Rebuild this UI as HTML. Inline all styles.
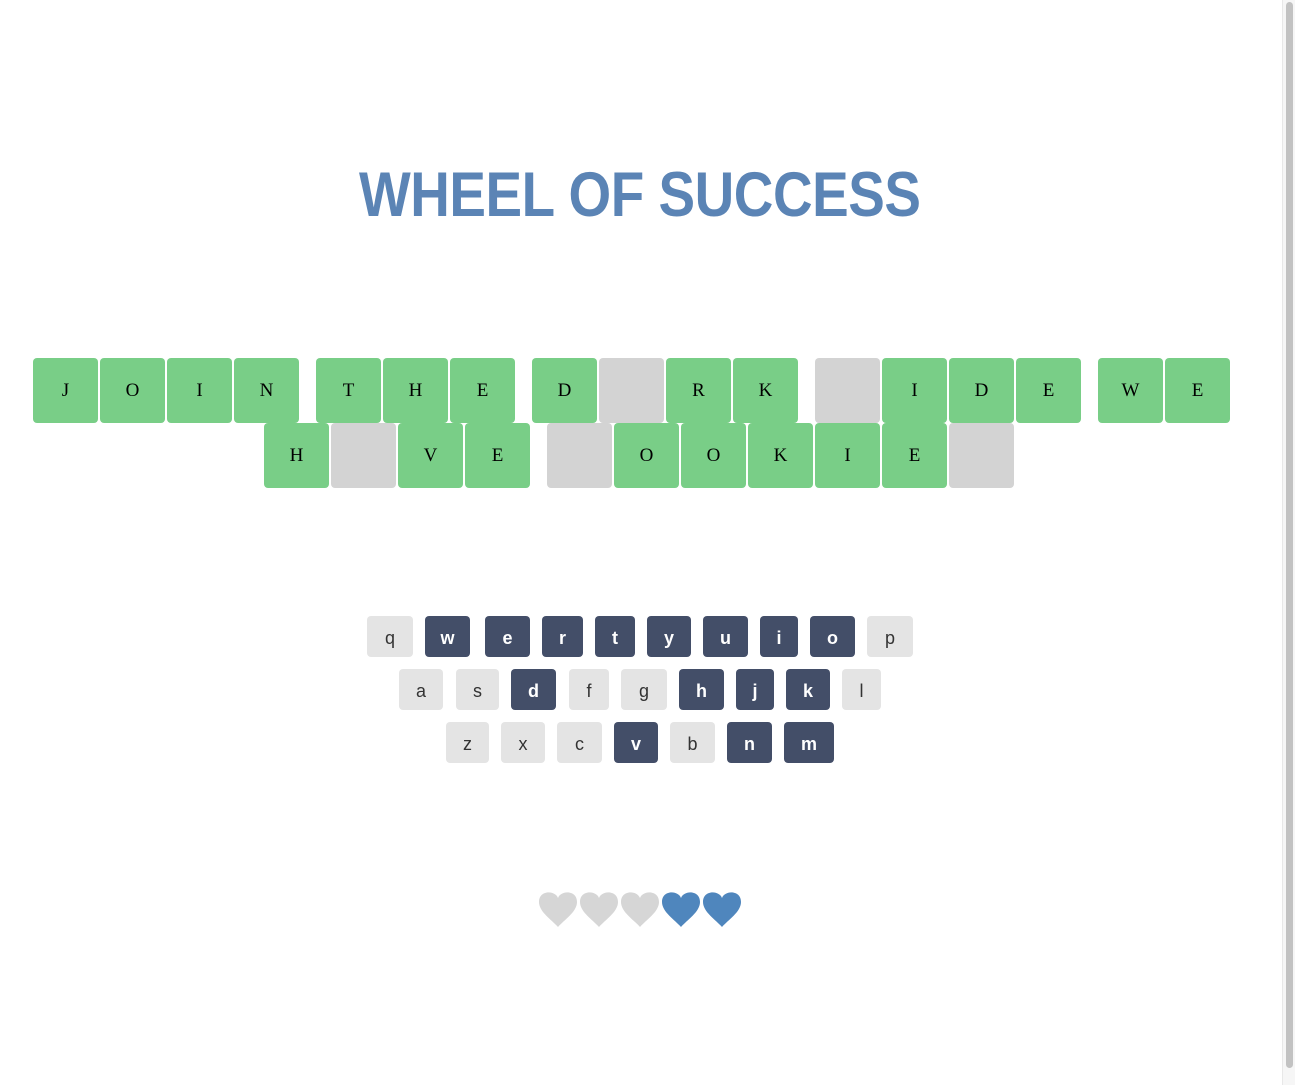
<!DOCTYPE html>
<html><head><meta charset="utf-8"><style>
body{margin:0;width:1295px;height:1085px;background:#fff;position:relative;overflow:hidden;font-family:"Liberation Sans",sans-serif}
h1{position:absolute;left:0;width:1280px;top:155px;margin:0;text-align:center;font-size:63px;line-height:80px;font-weight:bold;color:#5b84b5}
h1 span{display:inline-block;transform:scaleX(0.87);letter-spacing:-0.5px}
.t{position:absolute;width:65px;height:65px;border-radius:4px;background:#79ce87;font-family:"Liberation Serif",serif;font-size:19px;line-height:65px;text-align:center;color:#000}
.t.b{background:#d3d3d3}
.k{position:absolute;height:41px;border-radius:4px;background:#e4e4e4;color:#333;font-size:18px;line-height:44px;text-align:center}
.k.d{background:#434e68;color:#fff;font-weight:bold}
.sb{position:absolute;right:0;top:0;width:12px;height:1085px;background:#f6f6f6;border-left:1px solid #e8e8e8}
.sb div{position:absolute;left:3px;top:2px;width:7px;height:1066px;background:#c2c2c2;border-radius:4px}
svg{position:absolute}
</style></head><body>
<h1><span>WHEEL OF SUCCESS</span></h1>
<div class="t" style="left:33px;top:358px">J</div>
<div class="t" style="left:100px;top:358px">O</div>
<div class="t" style="left:167px;top:358px">I</div>
<div class="t" style="left:234px;top:358px">N</div>
<div class="t" style="left:316px;top:358px">T</div>
<div class="t" style="left:383px;top:358px">H</div>
<div class="t" style="left:450px;top:358px">E</div>
<div class="t" style="left:532px;top:358px">D</div>
<div class="t b" style="left:599px;top:358px"></div>
<div class="t" style="left:666px;top:358px">R</div>
<div class="t" style="left:733px;top:358px">K</div>
<div class="t b" style="left:815px;top:358px"></div>
<div class="t" style="left:882px;top:358px">I</div>
<div class="t" style="left:949px;top:358px">D</div>
<div class="t" style="left:1016px;top:358px">E</div>
<div class="t" style="left:1098px;top:358px">W</div>
<div class="t" style="left:1165px;top:358px">E</div>
<div class="t" style="left:264px;top:423px">H</div>
<div class="t b" style="left:331px;top:423px"></div>
<div class="t" style="left:398px;top:423px">V</div>
<div class="t" style="left:465px;top:423px">E</div>
<div class="t b" style="left:547px;top:423px"></div>
<div class="t" style="left:614px;top:423px">O</div>
<div class="t" style="left:681px;top:423px">O</div>
<div class="t" style="left:748px;top:423px">K</div>
<div class="t" style="left:815px;top:423px">I</div>
<div class="t" style="left:882px;top:423px">E</div>
<div class="t b" style="left:949px;top:423px"></div>

<div class="k" style="left:367px;top:616px;width:46px">q</div>
<div class="k d" style="left:425px;top:616px;width:45px">w</div>
<div class="k d" style="left:485px;top:616px;width:45px">e</div>
<div class="k d" style="left:542px;top:616px;width:41px">r</div>
<div class="k d" style="left:595px;top:616px;width:40px">t</div>
<div class="k d" style="left:647px;top:616px;width:44px">y</div>
<div class="k d" style="left:703px;top:616px;width:45px">u</div>
<div class="k d" style="left:760px;top:616px;width:38px">i</div>
<div class="k d" style="left:810px;top:616px;width:45px">o</div>
<div class="k" style="left:867px;top:616px;width:46px">p</div>
<div class="k" style="left:399px;top:669px;width:44px">a</div>
<div class="k" style="left:456px;top:669px;width:43px">s</div>
<div class="k d" style="left:511px;top:669px;width:45px">d</div>
<div class="k" style="left:569px;top:669px;width:40px">f</div>
<div class="k" style="left:621px;top:669px;width:46px">g</div>
<div class="k d" style="left:679px;top:669px;width:45px">h</div>
<div class="k d" style="left:736px;top:669px;width:38px">j</div>
<div class="k d" style="left:786px;top:669px;width:44px">k</div>
<div class="k" style="left:842px;top:669px;width:39px">l</div>
<div class="k" style="left:446px;top:722px;width:43px">z</div>
<div class="k" style="left:501px;top:722px;width:44px">x</div>
<div class="k" style="left:557px;top:722px;width:45px">c</div>
<div class="k d" style="left:614px;top:722px;width:44px">v</div>
<div class="k" style="left:670px;top:722px;width:45px">b</div>
<div class="k d" style="left:727px;top:722px;width:45px">n</div>
<div class="k d" style="left:784px;top:722px;width:50px">m</div>

<svg style="left:538px;top:890px" width="210" height="40" viewBox="0 0 210 40">
<defs><path id="h" d="M0 6 C-3 -2 -19 -2 -19 10 C-19 20 -6 28 0 35 C6 28 19 20 19 10 C19 -2 3 -2 0 6Z"/></defs>
<use href="#h" x="20" y="2" fill="#d6d6d6"/>
<use href="#h" x="61" y="2" fill="#d6d6d6"/>
<use href="#h" x="102" y="2" fill="#d6d6d6"/>
<use href="#h" x="143" y="2" fill="#4f86bd"/>
<use href="#h" x="184" y="2" fill="#4f86bd"/>
</svg>
<div class="sb"><div></div></div>
</body></html>
